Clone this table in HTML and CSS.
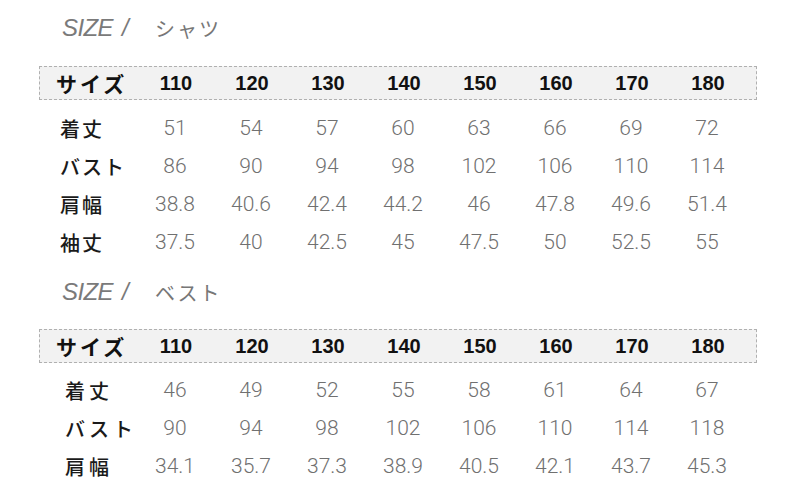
FILE: index.html
```html
<!DOCTYPE html>
<html lang="ja">
<head>
<meta charset="utf-8">
<link rel="stylesheet" href="styles.css">
</head>
<body>
<div class="page">
  <div class="title title-first"><span class="size">SIZE /</span><span class="kind">シャツ</span></div>
  <div class="head">
    <div class="lab">サイズ</div>
    <div>110</div><div>120</div><div>130</div><div>140</div><div>150</div><div>160</div><div>170</div><div>180</div>
  </div>
  <div class="rows rows-first">
    <div class="row"><div class="lab">着丈</div><div>51</div><div>54</div><div>57</div><div>60</div><div>63</div><div>66</div><div>69</div><div>72</div></div>
    <div class="row"><div class="lab">バスト</div><div>86</div><div>90</div><div>94</div><div>98</div><div>102</div><div>106</div><div>110</div><div>114</div></div>
    <div class="row"><div class="lab">肩幅</div><div>38.8</div><div>40.6</div><div>42.4</div><div>44.2</div><div>46</div><div>47.8</div><div>49.6</div><div>51.4</div></div>
    <div class="row"><div class="lab">袖丈</div><div>37.5</div><div>40</div><div>42.5</div><div>45</div><div>47.5</div><div>50</div><div>52.5</div><div>55</div></div>
  </div>
  <div class="title title-second"><span class="size">SIZE /</span><span class="kind">ベスト</span></div>
  <div class="head head-second">
    <div class="lab">サイズ</div>
    <div>110</div><div>120</div><div>130</div><div>140</div><div>150</div><div>160</div><div>170</div><div>180</div>
  </div>
  <div class="rows rows-second">
    <div class="row"><div class="lab">着丈</div><div>46</div><div>49</div><div>52</div><div>55</div><div>58</div><div>61</div><div>64</div><div>67</div></div>
    <div class="row"><div class="lab">バスト</div><div>90</div><div>94</div><div>98</div><div>102</div><div>106</div><div>110</div><div>114</div><div>118</div></div>
    <div class="row"><div class="lab">肩幅</div><div>34.1</div><div>35.7</div><div>37.3</div><div>38.9</div><div>40.5</div><div>42.1</div><div>43.7</div><div>45.3</div></div>
  </div>
</div>
</body>
</html>
```

FILE: styles.css
```css
html, body {
  margin: 0;
  padding: 0;
  background: #ffffff;
}
.page {
  width: 790px;
  height: 488px;
  overflow: hidden;
  padding-left: 39px;
  box-sizing: border-box;
  font-family: "Noto Sans CJK JP", sans-serif;
}
.title {
  display: flex;
  align-items: center;
  padding-left: 23px;
  color: #7a7a7a;
}
.title-first {
  height: 56px;
}
.title-second {
  height: 40px;
  margin-top: 11px;
}
.size {
  font-family: "Liberation Sans", Arial, sans-serif;
  font-style: italic;
  font-size: 24px;
  letter-spacing: -0.6px;
  word-spacing: 3px;
  width: 93px;
}
.kind {
  font-family: "Noto Sans CJK JP", sans-serif;
  font-size: 20px;
  letter-spacing: 2px;
  color: #777;
}
.head, .row {
  display: grid;
  grid-template-columns: 98px repeat(8, 76px);
  align-items: center;
}
.head {
  width: 718px;
  height: 34px;
  box-sizing: border-box;
  margin-top: 10px;
  border: 1px dashed #b0b0b0;
  background: #f2f2f2;
  font-family: "Liberation Sans", Arial, sans-serif;
  font-weight: bold;
  font-size: 20px;
  color: #111;
  text-align: center;
}
.head-second {
  margin-top: 17px;
}
.head .lab {
  font-family: "Noto Sans CJK JP", sans-serif;
  font-weight: bold;
  font-size: 21px;
  text-align: left;
  padding-left: 17px;
  letter-spacing: 3px;
  margin-left: -1px;
}
.rows-first {
  margin-top: 9px;
}
.rows-second {
  margin-top: 8px;
}
.row {
  height: 38px;
  font-family: Roboto, "Liberation Sans", sans-serif;
  font-weight: 300;
  font-size: 21px;
  color: #707070;
  text-align: center;
}
.row .lab {
  font-family: "Noto Sans CJK JP", sans-serif;
  font-weight: 500;
  font-size: 20px;
  color: #1a1a1a;
  text-align: left;
  padding-left: 21px;
  letter-spacing: 2px;
}
.rows-second .row .lab {
  padding-left: 26px;
  letter-spacing: 4px;
}
```
